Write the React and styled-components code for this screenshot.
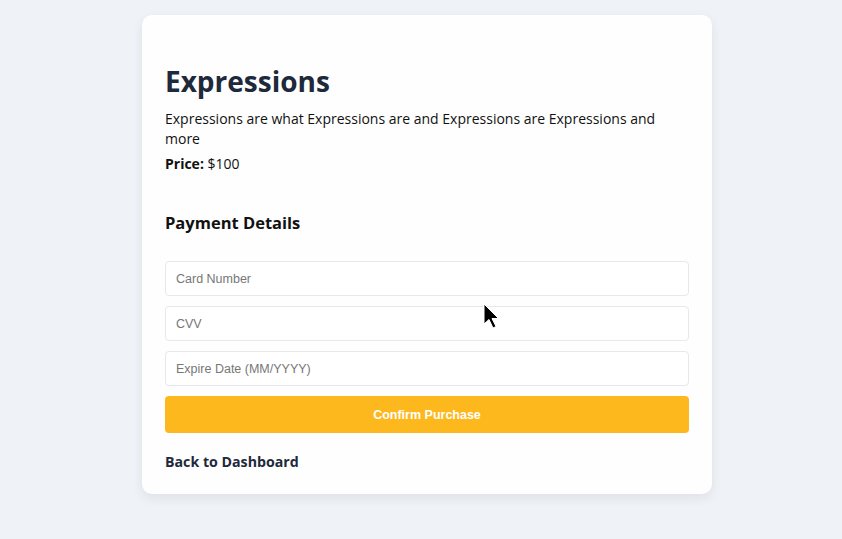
import React from 'react';
import styled, { createGlobalStyle } from 'styled-components';

const GlobalStyle = createGlobalStyle`
  html, body {
    margin: 0;
    padding: 0;
    background: #eff2f6;
    font-family: "Open Sans", Lato, sans-serif;
  }
`

const Page = styled.div`
  width: 842px;
  height: 539px;
  padding-top: 15px;
  box-sizing: border-box;
  position: relative;
`

const Card = styled.div`
  width: 570px;
  margin-left: 142px;
  box-sizing: border-box;
  background: #fefefe;
  border-radius: 10px;
  box-shadow: 0 4px 12px rgba(30, 41, 59, 0.08);
  padding: 46px 23px 22px 23px;
`

const Title = styled.h1`
  margin: 0 0 8px 0;
  font-size: 28px;
  line-height: 40px;
  font-weight: 700;
  color: #1e293b;
`

const Desc = styled.p`
  margin: 0;
  font-size: 14px;
  line-height: 20px;
  color: #111;
`

const Price = styled.p`
  margin: 5px 0 0 0;
  font-size: 14px;
  line-height: 20px;
  color: #111;
  b {
    font-weight: 700;
  }
`

const SectionTitle = styled.h2`
  margin: 37px 0 26px 0;
  font-size: 16.5px;
  line-height: 24px;
  font-weight: 700;
  color: #111;
`

const Form = styled.form`
  display: flex;
  flex-direction: column;
  gap: 10px;
`

const Input = styled.input`
  height: 35px;
  box-sizing: border-box;
  border: 1px solid #e6e8ec;
  border-radius: 4px;
  background: #fff;
  padding: 0 10px;
  font-family: "Liberation Sans", Arial, sans-serif;
  font-size: 12.5px;
  color: #333;
  &::placeholder {
    color: #777;
  }
`

const Button = styled.button`
  height: 37px;
  border: none;
  border-radius: 4px;
  background: #fdb81e;
  color: #fff;
  font-family: "Liberation Sans", Arial, sans-serif;
  font-weight: 700;
  font-size: 12.5px;
`

const BackLink = styled.a`
  display: block;
  margin-top: 19px;
  font-size: 14.2px;
  line-height: 20px;
  font-weight: 700;
  color: #1e293b;
  text-decoration: none;
`

const Cursor = styled.svg`
  position: absolute;
  left: 483px;
  top: 303px;
`

export default function App() {
  return (
    <Page>
      <GlobalStyle />
      <Card>
        <Title>Expressions</Title>
        <Desc>Expressions are what Expressions are and Expressions are Expressions and more</Desc>
        <Price><b>Price:</b> $100</Price>
        <SectionTitle>Payment Details</SectionTitle>
        <Form onSubmit={e => e.preventDefault()}>
          <Input placeholder="Card Number" />
          <Input placeholder="CVV" />
          <Input placeholder="Expire Date (MM/YYYY)" />
          <Button type="submit">Confirm Purchase</Button>
        </Form>
        <BackLink href="#">Back to Dashboard</BackLink>
      </Card>
      <Cursor width="18" height="28" viewBox="0 0 18 28">
        <path d="M1 1 L1 21 L6 16.5 L10 25 L13 23.5 L9 15.5 L15.5 15.5 Z" fill="#000" stroke="#fff" strokeWidth="1" />
      </Cursor>
    </Page>
  );
}
